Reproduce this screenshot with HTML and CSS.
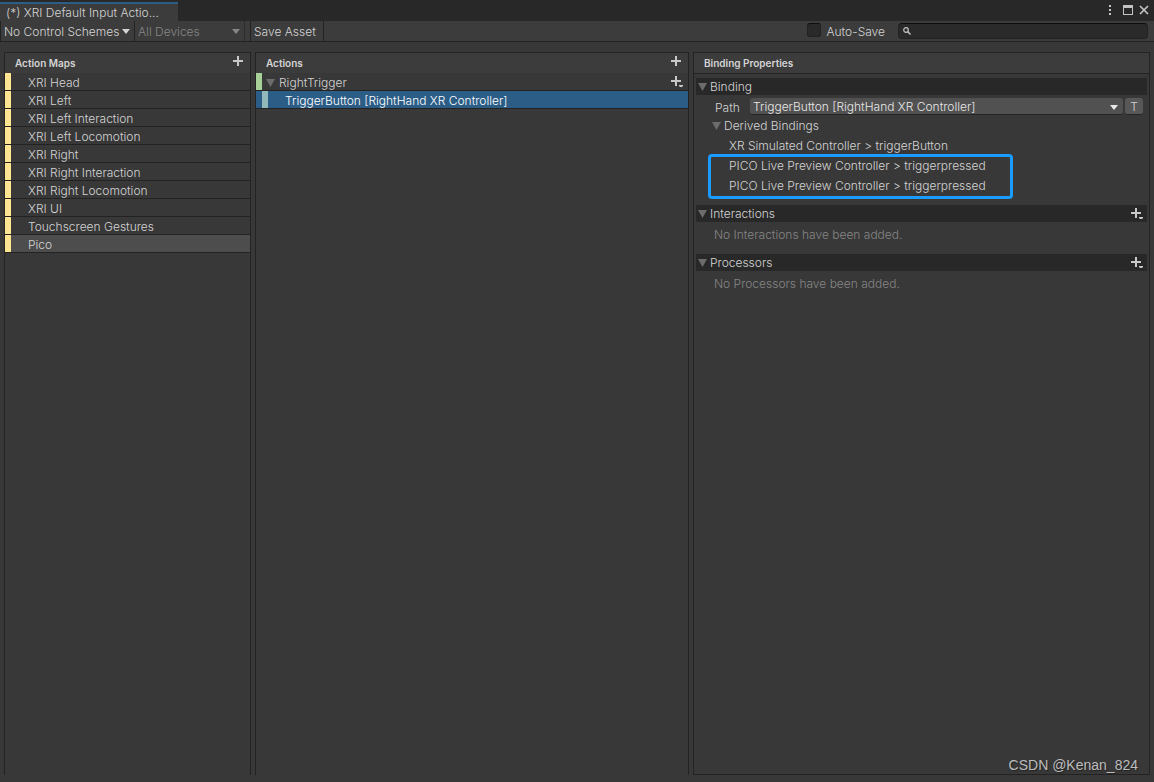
FILE: index.html
```html
<!DOCTYPE html>
<html lang="en">
<head>
<meta charset="utf-8">
<title>XRI Default Input Actions</title>
<link rel="stylesheet" href="styles.css">
</head>
<body>
<svg class="defs" aria-hidden="true">
  <symbol id="plus" viewBox="0 0 12 12"><path d="M5 1h2v4h4v2H7v4H5V7H1V5h4z" fill="#c8c8c8"/></symbol>
  <symbol id="plus-menu" viewBox="0 0 14 14"><path d="M5 1h2v4h4v2H7v4H5V7H1V5h4zM9 10h4v1l-1 1h-2l-1-1z" fill="#c8c8c8"/></symbol>
  <symbol id="fold" viewBox="0 0 10 8"><path d="M0 0h9L4.500 8z" fill="#6c6c6c"/></symbol>
  <symbol id="caret" viewBox="0 0 8 5"><path d="M0 0h8L4 5z" fill="currentColor"/></symbol>
</svg>
<div class="window">
  <header class="titlebar">
    <div class="tab">(*) XRI Default Input Actio...</div>
    <div class="window-buttons">
      <button class="icon-button menu" aria-label="Menu"><svg width="4" height="12" viewBox="0 0 4 12"><path d="M1 1h2v2H1zM1 5h2v2H1zM1 9h2v2H1z" fill="#c4c4c4"/></svg></button>
      <button class="icon-button" aria-label="Maximize"><svg width="10" height="10" viewBox="0 0 10 10"><path d="M0 0h10v10H0zM1 3v6h8V3z" fill="#c4c4c4" fill-rule="evenodd"/></svg></button>
      <button class="icon-button" aria-label="Close"><svg width="10" height="10" viewBox="0 0 10 10"><path d="M1 1l8 8M9 1L1 9" stroke="#c4c4c4" stroke-width="1.700"/></svg></button>
    </div>
  </header>

  <div class="toolbar">
    <div class="dropdown schemes">
      <select aria-label="Control scheme"><option>No Control Schemes</option></select>
      <svg class="caret"><use href="#caret"/></svg>
    </div>
    <div class="dropdown devices">
      <select aria-label="Devices" disabled><option>All Devices</option></select>
      <svg class="caret"><use href="#caret"/></svg>
    </div>
    <button class="save">Save Asset</button>
    <label class="auto-save"><input type="checkbox">Auto-Save</label>
    <label class="search">
      <svg width="8" height="8" viewBox="0 0 8 8"><circle cx="3" cy="3" r="2.300" fill="none" stroke="#c4c4c4" stroke-width="1.200"/><path d="M4.600 4.600L7.500 7.500" stroke="#c4c4c4" stroke-width="1.400"/></svg>
      <input type="text" aria-label="Search">
    </label>
  </div>

  <main class="panels">
    <section class="panel">
      <div class="panel-header"><h2>Action Maps</h2><button class="icon-button" aria-label="Add action map"><svg class="plus"><use href="#plus"/></svg></button></div>
      <ul class="rows">
        <li><button class="row map">XRI Head</button></li>
        <li><button class="row map">XRI Left</button></li>
        <li><button class="row map">XRI Left Interaction</button></li>
        <li><button class="row map">XRI Left Locomotion</button></li>
        <li><button class="row map">XRI Right</button></li>
        <li><button class="row map">XRI Right Interaction</button></li>
        <li><button class="row map">XRI Right Locomotion</button></li>
        <li><button class="row map">XRI UI</button></li>
        <li><button class="row map">Touchscreen Gestures</button></li>
        <li><button class="row map current">Pico</button></li>
      </ul>
    </section>

    <section class="panel">
      <div class="panel-header"><h2>Actions</h2><button class="icon-button" aria-label="Add action"><svg class="plus"><use href="#plus"/></svg></button></div>
      <ul class="rows">
        <li class="action">
          <button class="row-label"><svg class="fold"><use href="#fold"/></svg>RightTrigger</button>
          <button class="icon-button" aria-label="Add binding"><svg class="plus-menu"><use href="#plus-menu"/></svg></button>
        </li>
        <li class="binding-row"><button class="row binding">TriggerButton [RightHand XR Controller]</button></li>
      </ul>
    </section>

    <section class="panel properties">
      <div class="panel-header"><h2>Binding Properties</h2></div>
      <div class="sections">
        <div class="section-bar"><button class="row-label"><svg class="fold"><use href="#fold"/></svg>Binding</button></div>
        <div class="path">
          <label for="path">Path</label>
          <div class="dropdown path-select">
            <select id="path"><option>TriggerButton [RightHand XR Controller]</option></select>
            <svg class="caret"><use href="#caret"/></svg>
          </div>
          <button class="text-mode">T</button>
        </div>
        <button class="row-label derived"><svg class="fold"><use href="#fold"/></svg>Derived Bindings</button>
        <p class="derived-item">XR Simulated Controller &gt; triggerButton</p>
        <div class="highlight">
          <p>PICO Live Preview Controller &gt; triggerpressed</p>
          <p>PICO Live Preview Controller &gt; triggerpressed</p>
        </div>
        <div class="section-bar"><button class="row-label"><svg class="fold"><use href="#fold"/></svg>Interactions</button><button class="icon-button" aria-label="Add interaction"><svg class="plus-menu"><use href="#plus-menu"/></svg></button></div>
        <p class="empty">No Interactions have been added.</p>
        <div class="section-bar"><button class="row-label"><svg class="fold"><use href="#fold"/></svg>Processors</button><button class="icon-button" aria-label="Add processor"><svg class="plus-menu"><use href="#plus-menu"/></svg></button></div>
        <p class="empty">No Processors have been added.</p>
      </div>
    </section>
  </main>
  <div class="watermark">CSDN @Kenan_824</div>
</div>
</body>
</html>
```
FILE: styles.css
```css
* { box-sizing: border-box; }

body {
  margin: 0;
  background: #383838;
  color: #d4d4d4;
  font: 300 12px/18px Inter, "Liberation Sans", sans-serif;
}

button, select, input { font: inherit; color: inherit; }
button { border: 0; padding: 0; background: none; text-align: left; }
h2, p, ul { margin: 0; padding: 0; }
ul { list-style: none; }
svg { display: block; flex: none; }
.defs { position: absolute; width: 0; height: 0; }

.window { position: relative; display: flex; flex-direction: column; min-height: 100vh; }

.titlebar {
  display: flex;
  justify-content: space-between;
  height: 21px;
  padding-top: 2px;
  background: #282828;
}
.tab {
  width: 178px;
  padding: 0 6px;
  border-top: 2px solid #2c5d87;
  background: #3c3c3c;
  white-space: nowrap;
}
.window-buttons { display: flex; gap: 6px; padding: 2px 5px 0 0; height: 14px; align-items: center; }
.menu { margin-right: 5px; }

.icon-button { display: flex; align-items: center; }
.plus { width: 12px; height: 12px; }
.plus-menu { width: 14px; height: 14px; }
.fold { width: 10px; height: 8px; }
.caret { width: 8px; height: 5px; }

.toolbar {
  display: flex;
  height: 21px;
  border-bottom: 1px solid #232323;
  background: #3c3c3c;
}
.dropdown { display: grid; align-items: center; }
.dropdown select, .dropdown .caret { grid-area: 1 / 1; }
.dropdown .caret { justify-self: end; margin-right: 4px; pointer-events: none; }
.dropdown select {
  width: 100%;
  height: 100%;
  padding: 1px 0 0 3px;
  border: 0;
  background: none;
  appearance: none;
  opacity: 1;
}
.schemes { width: 135px; border: solid #232323; border-width: 0 1px; }
.devices { width: 110px; color: #868686; border-right: 1px solid #2c2c2c; }
.save { margin-left: 5px; padding: 1px 7px 0 3px; border: solid #232323; border-width: 0 1px; }
.auto-save { display: flex; align-items: center; gap: 5px; margin-left: auto; padding-top: 2px; }
.auto-save input {
  width: 14px;
  height: 14px;
  margin: 0 0 4px;
  appearance: none;
  border: 1px solid #212121;
  border-top-color: #0d0d0d;
  border-radius: 3px;
  background: #2a2a2a;
}
.search {
  display: flex;
  align-items: center;
  gap: 4px;
  width: 250px;
  height: 16px;
  margin: 2px 6px 0 13px;
  padding: 0 4px;
  border: 1px solid #212121;
  border-top-color: #0d0d0d;
  border-radius: 4px;
  background: #2a2a2a;
}
.search input { flex: 1; min-width: 0; height: 12px; padding: 0; border: 0; outline: 0; background: none; }

.panels {
  flex: 1;
  display: grid;
  grid-template-columns: 247px 434fr 457fr;
  gap: 4px;
  padding: 10px 4px 7px;
}
.panel { min-width: 0; border: solid #232323; border-width: 1px 1px 0; }
.panel-header {
  display: flex;
  justify-content: space-between;
  height: 20px;
  padding: 0 6px 0 10px;
  background: #3c3c3c;
}
.panel-header h2 { font-size: 10px; line-height: 21px; font-weight: 600; }
.panel-header .icon-button { height: 16px; }

.row {
  display: block;
  width: 100%;
  height: 18px;
  padding: 1px 0 0 17px;
  border-bottom: 1px solid #232323;
  border-left: 6px solid transparent;
  line-height: 17px;
}
.map { background: #383838; border-left: 0; box-shadow: inset 6px 0 #ffe592; padding-left: 23px; }
.map.current { background-color: #4d4d4d; }
.row-label { display: flex; align-items: center; gap: 3px; }
.row-label .fold { margin-bottom: 1px; }
.action {
  display: flex;
  justify-content: space-between;
  height: 18px;
  padding: 1px 4px 0 10px;
  border-bottom: 1px solid #232323;
  box-shadow: inset 6px 0 #a6d098;
}
.action .row-label { height: 18px; }
.binding-row { padding-left: 6px; background: #2c5d87; border-bottom: 1px solid #232323; }
.binding { height: 17px; border-bottom: 0; border-left-color: #92b8ba; color: #ffffff; }

.properties { border-bottom-width: 1px; }
.properties .panel-header { height: 21px; border-bottom: 1px solid #232323; }
.sections { padding: 4px 2px; }
.section-bar {
  display: flex;
  justify-content: space-between;
  height: 17px;
  padding: 0 3px 0 2px;
  background: #282828;
}
.section-bar .row-label { height: 18px; gap: 2px; }
.section-bar .icon-button { height: 18px; }
.path { display: flex; gap: 2px; height: 18px; margin: 3px 4px 0 19px; }
.path label { width: 33px; padding-top: 1px; }
.path-select { flex: 1; height: 17px; border-bottom: 1px solid #242424; border-radius: 3px; background: #515151; color: #e8e8e8; }
.path-select select { padding-top: 0; }
.path-select .caret { margin-right: 5px; }
.text-mode { width: 18px; height: 17px; border-bottom: 1px solid #242424; border-radius: 3px; background: #585858; text-align: center; line-height: 17px; }
.derived { gap: 2px; margin: 1px 0 0 16px; }
.derived-item { margin: 2px 0 0 33px; }
.highlight {
  width: 305px;
  margin: -1px 0 6px 12px;
  padding: 0 18px;
  border: 3px solid #1a9bff;
  border-radius: 4px;
}
.highlight p { height: 19px; line-height: 18px; white-space: nowrap; }
.highlight p + p { height: 20px; line-height: 20px; }
.empty { padding: 4px 0 10px 18px; color: #868686; }

.watermark {
  position: absolute;
  right: 16px;
  bottom: 7px;
  color: #bdbdbd;
  font: 14px/20px "Liberation Sans", sans-serif;
  text-shadow: 1px 1px 1px #222222;
}
```
